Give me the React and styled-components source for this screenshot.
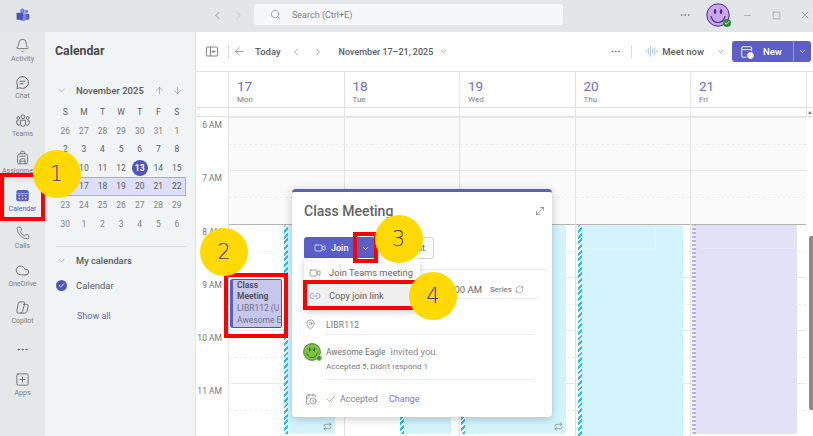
import React from "react";
import styled, { createGlobalStyle } from "styled-components";
import {
  ArrowDown, ArrowLeft, ArrowUp, AudioLines, Backpack, Bell, CalendarClock, Check,
  ChevronDown, ChevronLeft, ChevronRight, Cloud, Ellipsis, Link2, MapPin, Minus,
  MoveDiagonal, Phone, RefreshCw, Repeat, Search, Square, SquarePlus, Video, X,
} from "lucide-react";

const Global = createGlobalStyle`
  html, body { margin: 0; padding: 0; background: #fff; }
  * { box-sizing: border-box; }
  body { font-family: Roboto, "Noto Sans", Arial, sans-serif; color: #555; }
`;

const Page = styled.div`
  position: relative;
  width: 813px;
  height: 436px;
  overflow: hidden;
  display: flex;
  flex-direction: column;
`;

/* ---------- title bar ---------- */
const TitleBar = styled.header`
  height: 32px;
  flex: none;
  background: #e3e6e8;
  display: flex;
  align-items: center;
  color: #707070;
`;
const LogoSlot = styled.div`
  width: 45px;
  display: flex;
  justify-content: center;
  margin-top: -2px;
`;
const BarButton = styled.span`
  width: ${p => p.$w || 21}px;
  margin-left: ${p => p.$ml || 0}px;
  margin-top: -2px;
  flex: none;
  display: flex;
  justify-content: center;
  color: ${p => p.$c || "#707070"};
`;
const SearchBox = styled.div`
  width: 309px;
  height: 21px;
  margin: -3px 0 0 5px;
  background: #f6f7f8;
  border-radius: 3px;
  display: flex;
  align-items: center;
  padding-left: 16px;
  gap: 11px;
  font-size: 9px;
  color: #7d7d7d;
`;
const AvatarSlot = styled.div`
  position: relative;
  width: 24px;
  height: 24px;
  margin: -2px 0 0 11px;
  flex: none;
`;
const StatusDot = styled.span`
  position: absolute;
  right: -1px;
  bottom: 0;
  width: 8px;
  height: 8px;
  border-radius: 50%;
  background: #2e8b3a;
  color: #fff;
  display: flex;
  align-items: center;
  justify-content: center;
`;

/* ---------- layout ---------- */
const Shell = styled.div`
  flex: 1;
  display: flex;
  min-height: 0;
`;
const Rail = styled.nav`
  width: 45px;
  flex: none;
  background: #e4e8e8;
  display: flex;
  flex-direction: column;
`;
const RailItem = styled.div`
  height: ${p => p.$h || 37.5}px;
  flex: none;
  display: flex;
  flex-direction: column;
  align-items: center;
  justify-content: center;
  gap: 1px;
  color: ${p => (p.$active ? "#5b5fc7" : "#616161")};
  background: ${p => (p.$active ? "#edf0f0" : "transparent")};
`;
const RailLabel = styled.span`
  font-size: 7px;
  line-height: 10px;
  white-space: nowrap;
  color: ${p => (p.$active ? "#5b5fc7" : "#7f7f7f")};
`;

/* ---------- sidebar ---------- */
const Sidebar = styled.aside`
  width: 151px;
  flex: none;
  background: #f0f4f5;
  border-right: 1px solid #e2e5e6;
  padding: 11px 9px 0 11px;
  color: #555;
`;
const SideTitle = styled.h2`
  margin: 0 0 0 -1px;
  font-size: 12.3px;
  line-height: 16px;
  font-weight: 700;
  color: #4a4a4a;
`;
const MonthHead = styled.div`
  height: 20px;
  margin: 21px 0 2.7px;
  display: flex;
  align-items: center;
  font-size: 9.5px;
  font-weight: 500;
  color: #5a5a5a;
`;
const ChevronSlot = styled.span`
  width: 20px;
  flex: none;
  display: flex;
  justify-content: flex-start;
  color: #777;
`;
const MonthName = styled.span`
  flex: 1;
`;
const MonthArrows = styled.span`
  display: flex;
  gap: 7px;
  margin-right: 3px;
  color: #777;
`;
const WeekRow = styled.div`
  display: grid;
  grid-template-columns: repeat(7, 18.6px);
  height: 18.6px;
  align-items: center;
  justify-items: center;
  font-size: 8.5px;
  background: ${p => (p.$selected ? "#dcdff7" : "transparent")};
  outline: ${p => (p.$selected ? "1px solid #a9abd0" : "none")};
  outline-offset: -1px;
`;
const Day = styled.span`
  width: 16px;
  height: 16px;
  line-height: 16px;
  border-radius: 50%;
  text-align: center;
  color: ${p => (p.$today ? "#fff" : p.$muted ? "#808080" : "#5c5c5c")};
  background: ${p => (p.$today ? "#5255b8" : "transparent")};
  font-weight: ${p => (p.$today ? 700 : 400)};
`;
const SideDivider = styled.hr`
  margin: 13px 0 3.5px;
  border: 0;
  border-top: 1px solid #d9dcdd;
`;
const SideRow = styled.div`
  height: 20px;
  margin-top: ${p => p.$mt || 0}px;
  display: flex;
  align-items: center;
  font-size: ${p => p.$size || 9.5}px;
  font-weight: ${p => p.$weight || 400};
  color: ${p => p.$c || "#5a5a5a"};
  padding-left: ${p => p.$pl || 0}px;
`;
const CheckDot = styled.span`
  width: 11px;
  height: 11px;
  margin-right: 9px;
  border-radius: 50%;
  background: #5255b8;
  color: #fff;
  display: flex;
  align-items: center;
  justify-content: center;
`;

/* ---------- main ---------- */
const Main = styled.main`
  flex: 1;
  min-width: 0;
  display: flex;
  flex-direction: column;
  background: #fff;
`;
const Toolbar = styled.div`
  height: 40px;
  flex: none;
  display: flex;
  align-items: center;
  border-bottom: 1px solid #e2e2e2;
  color: #666;
`;
const Tool = styled.span`
  width: ${p => p.$w}px;
  margin-left: ${p => p.$ml || 0}px;
  flex: none;
  display: flex;
  justify-content: center;
`;
const VSep = styled.span`
  width: 1px;
  height: 13px;
  margin-left: ${p => p.$ml || 0}px;
  background: #dcdcdc;
  flex: none;
`;
const ToolText = styled.span`
  margin-left: ${p => p.$ml || 0}px;
  font-size: ${p => p.$size || 9.5}px;
  font-weight: ${p => p.$weight || 500};
  color: #5c5c5c;
  white-space: nowrap;
`;
const Spacer = styled.span`
  flex: 1;
`;
const NewButton = styled.div`
  width: 79px;
  height: 21px;
  margin: 0 2px 0 6px;
  flex: none;
  display: flex;
  align-items: center;
  background: #5b5fc7;
  border-radius: 3px;
  color: #fff;
  font-size: 9.5px;
  font-weight: 500;
`;
const NewMain = styled.span`
  width: 62px;
  height: 100%;
  display: flex;
  align-items: center;
  gap: 9px;
  padding-left: 8px;
  border-right: 1px solid #9497dd;
`;
const NewCaret = styled.span`
  flex: 1;
  display: flex;
  justify-content: center;
`;

const WeekHeader = styled.div`
  height: 36px;
  flex: none;
  display: grid;
  grid-template-columns: 32px repeat(5, 115.5px) 1fr;
  border-bottom: 1px solid #e2e2e2;
`;
const DayHead = styled.div`
  border-left: 1px solid #e2e2e2;
  padding: 6px 0 0 8px;
  display: flex;
  flex-direction: column;
`;
const DayNum = styled.span`
  font-size: 13.5px;
  line-height: 17px;
  color: #6a6cd8;
`;
const DayName = styled.span`
  font-size: 8px;
  line-height: 10px;
  color: #7c7c7c;
`;
const HeaderEnd = styled.div`
  border-left: 1px solid #e2e2e2;
`;
const AllDay = styled.div`
  height: 9px;
  flex: none;
  display: grid;
  grid-template-columns: 32px repeat(5, 115.5px) 1fr;
  border-bottom: 1px solid #e2e2e2;
`;
const AllDayCell = styled.div`
  border-left: 1px solid #e2e2e2;
`;
const ScrollUp = styled.div`
  border-left: 1px solid #e2e2e2;
  position: relative;
  &::after {
    content: "";
    position: absolute;
    right: 1px;
    top: 3px;
    border-left: 2px solid transparent;
    border-right: 2px solid transparent;
    border-bottom: 3px solid #777;
  }
`;
const Grid = styled.div`
  flex: 1;
  min-height: 0;
  overflow: hidden;
  display: grid;
  grid-template-columns: 32px repeat(5, 115.5px) 1fr;
`;
const Gutter = styled.div`
  display: flex;
  flex-direction: column;
`;
const GutterLabel = styled.div`
  height: 53.3px;
  flex: none;
  text-align: right;
  padding: 3px 6px 0 0;
  font-size: 8.5px;
  line-height: 11px;
  color: #767676;
`;
const DayColumn = styled.div`
  position: relative;
  border-left: 1px solid #e2e2e2;
`;
const Hour = styled.div`
  position: relative;
  height: 53.3px;
  background: ${p => (p.$off ? "#fafafa" : "#fff")};
  border-top: 1px solid ${p => (p.$strong ? "#b4b4b4" : "#e8e8e8")};
  &::after {
    content: "";
    position: absolute;
    left: 0;
    right: 0;
    top: 26px;
    border-top: 1px dashed #eeeeee;
  }
`;
const Event = styled.div`
  position: absolute;
  z-index: 1;
  left: ${p => p.$left}px;
  width: ${p => p.$width}px;
  top: 108px;
  height: ${p => p.$h || 209}px;
  background: ${p => (p.$lav ? "#e2e2f6" : "#d3f4fd")};
  border-radius: 2px;
  overflow: hidden;
  &::before {
    content: "";
    position: absolute;
    left: 0;
    top: 0;
    bottom: 0;
    width: 4px;
    background: ${p =>
      p.$lav
        ? "repeating-linear-gradient(0deg, #b4b0ea 0 2px, #efeefc 2px 4px)"
        : "repeating-linear-gradient(135deg, #29bdee 0 2px, #e6fbff 2px 4px)"};
  }
`;
const EventGhost = styled.span`
  position: absolute;
  left: 6px;
  top: 5px;
  width: ${p => p.$w}px;
  height: 19px;
  border-right: 1px solid ${p => p.$c};
  border-bottom: 1px solid ${p => p.$c};
`;
const EventSync = styled.span`
  position: absolute;
  right: ${p => p.$right || 3}px;
  bottom: 3px;
  color: #555;
  display: flex;
`;
const Scroller = styled.div`
  padding: 119px 0 0 3.5px;
`;
const ScrollThumb = styled.div`
  width: 4px;
  height: 174px;
  border-radius: 2px 0 0 2px;
  background: #8a8a8a;
`;
const ClassEvent = styled.div`
  position: absolute;
  z-index: 2;
  left: 1px;
  top: 162px;
  width: 52px;
  height: 49px;
  background: #c6c7ed;
  border: 1px solid #555a66;
  border-left: 3px solid #5b5fc7;
  border-radius: 2px;
  padding: 0 0 0 4px;
  overflow: hidden;
  font-size: 8.5px;
  white-space: nowrap;
  color: #5c5c70;
`;
const EventLine = styled.div`
  height: ${p => p.$h || 11}px;
  line-height: ${p => p.$h || 11}px;
  font-weight: ${p => (p.$bold ? 700 : 400)};
  color: ${p => (p.$bold ? "#55555e" : "#72728a")};
`;

/* ---------- popup ---------- */
const Popup = styled.section`
  position: absolute;
  z-index: 5;
  left: 292px;
  top: 189px;
  width: 260px;
  height: 228px;
  background: #fff;
  border-top: 3px solid #5b5fc7;
  border-radius: 4px;
  box-shadow: 0 2px 10px rgba(0, 0, 0, 0.22);
  padding: 0 0 0 12px;
`;
const PopupHead = styled.div`
  height: 20px;
  margin-top: 9px;
  display: flex;
  align-items: center;
  justify-content: space-between;
  padding-right: 6px;
  color: #666;
`;
const PopupTitle = styled.h3`
  margin: 0;
  font-size: 14px;
  font-weight: 500;
  color: #636363;
  white-space: nowrap;
`;
const ActionRow = styled.div`
  height: 22px;
  margin: 16px 0 10px;
  display: flex;
  gap: 3px;
`;
const JoinButton = styled.div`
  width: 71px;
  height: 22px;
  background: #5b5fc7;
  border-radius: 3px;
  color: #fff;
  display: flex;
  align-items: center;
  font-size: 9px;
  font-weight: 500;
  padding-left: 10px;
  gap: 5px;
  position: relative;
`;
const JoinCaret = styled.span`
  position: absolute;
  right: 0;
  top: 0;
  bottom: 0;
  width: 19px;
  display: flex;
  align-items: center;
  justify-content: center;
`;
const ChatButton = styled.div`
  width: 56px;
  height: 22px;
  border: 1px solid #cfcfcf;
  border-radius: 3px;
  display: flex;
  align-items: center;
  justify-content: flex-end;
  padding-right: 8px;
  font-size: 9px;
  font-weight: 500;
  color: #777;
`;
const PopDivider = styled.div`
  height: 1px;
  margin: 0 ${p => p.$right}px 0 ${p => p.$left}px;
  background: #eeeeee;
`;
const TimeRow = styled.div`
  height: 28px;
  padding: 11px 28px 0 0;
  display: flex;
  justify-content: flex-end;
  align-items: center;
  gap: 8px;
  font-size: 9.5px;
  line-height: 14px;
  color: #666;
  white-space: nowrap;
`;
const SeriesTag = styled.span`
  display: flex;
  align-items: center;
  gap: 3px;
  font-size: 8px;
  color: #6c6c6c;
`;
const LocationRow = styled.div`
  height: 35px;
  padding-top: 16px;
  display: flex;
  align-items: center;
  font-size: 8.5px;
  color: #777;
  letter-spacing: 0.2px;
`;
const RowIcon = styled.span`
  width: 22px;
  flex: none;
  padding-left: 1px;
  display: flex;
  color: #6a6a6a;
`;
const OrganizerRow = styled.div`
  height: 44px;
  display: flex;
  padding-top: 8px;
`;
const AvatarWrap = styled.span`
  position: relative;
  width: 18px;
  height: 18px;
  margin: 0 5px 0 -1px;
  flex: none;
`;
const MiniBadge = styled.span`
  position: absolute;
  right: -1px;
  bottom: 0;
  width: 6px;
  height: 6px;
  border-radius: 50%;
  background: #3c8f3c;
  border: 1px solid #8fd06a;
`;
const OrganizerText = styled.div`
  display: flex;
  flex-direction: column;
`;
const OrganizerLine = styled.div`
  font-size: 8.4px;
  line-height: 14px;
  margin-top: 2px;
  color: #6f6f6f;
  white-space: nowrap;
`;
const InviteText = styled.span`
  margin-left: 3px;
  color: #858585;
  font-size: 9.4px;
`;
const AttendLine = styled.div`
  font-size: 8.1px;
  line-height: 12px;
  margin-top: 1px;
  color: #7a7a7a;
  white-space: nowrap;
`;
const ResponseRow = styled.div`
  height: 36px;
  display: flex;
  align-items: center;
  padding-top: 2px;
  font-size: 9px;
  color: #858585;
`;
const CheckMark = styled.span`
  display: flex;
  margin: 0 3px 0 -1px;
  color: #6f9e4f;
`;
const ChangeLink = styled.span`
  margin-left: 11px;
  color: #7376cf;
`;
const Menu = styled.div`
  position: absolute;
  left: 12px;
  top: 66px;
  width: 116px;
  height: 52px;
  padding-top: 3px;
  background: #fff;
  border-radius: 3px;
  box-shadow: 0 2px 7px rgba(0, 0, 0, 0.2);
`;
const MenuItem = styled.div`
  height: 23px;
  display: flex;
  align-items: center;
  padding-left: 3px;
  font-size: 9.3px;
  color: #5f5f5f;
  white-space: nowrap;
  background: ${p => (p.$hover ? "#f0f0f0" : "transparent")};
`;
const MenuIcon = styled.span`
  width: 22px;
  flex: none;
  padding-left: 2px;
  display: flex;
  color: ${p => p.$c || "#666"};
`;

/* ---------- annotations ---------- */
const RedBox = styled.div`
  position: absolute;
  z-index: 8;
  left: ${p => p.$x}px;
  top: ${p => p.$y}px;
  width: ${p => p.$w}px;
  height: ${p => p.$h}px;
  border: 4.5px solid #ff0000;
`;
const Marker = styled.div`
  position: absolute;
  z-index: 9;
  left: ${p => p.$x - 24}px;
  top: ${p => p.$y - 24}px;
  width: 48px;
  height: 48px;
  border-radius: 50%;
  background: #ffd900;
  color: #4b3596;
  font-family: "DejaVu Sans", sans-serif;
  font-size: 21px;
  font-weight: 300;
  display: flex;
  align-items: center;
  justify-content: center;
`;

/* ---------- drawings ---------- */
const TeamsLogo = () => (
  <svg width="14" height="14" viewBox="0 0 24 24">
    <circle cx="18" cy="6" r="3" fill="#7b83eb" />
    <rect x="15" y="10" width="8" height="10" rx="3" fill="#5059c9" />
    <circle cx="11" cy="5" r="4" fill="#7b83eb" />
    <rect x="6" y="9" width="12" height="13" rx="3" fill="#7b83eb" />
    <rect x="1" y="8" width="11" height="12" rx="1" fill="#4b53bc" />
  </svg>
);
const ChatIcon = () => (
  <svg width="15" height="15" viewBox="0 0 24 24" fill="none" stroke="currentColor" strokeWidth="1.5" strokeLinecap="round">
    <path d="M12 2.5a9.5 9.5 0 1 1-4.4 17.9L2.8 21.6l1.3-4.6A9.5 9.5 0 0 1 12 2.5Z" />
    <path d="M8 10h8M8 14h5" />
  </svg>
);
const TeamsIcon = () => (
  <svg width="16" height="15" viewBox="0 0 24 24" fill="none" stroke="currentColor" strokeWidth="1.4">
    <circle cx="12" cy="6" r="3" />
    <circle cx="4.5" cy="8" r="2.2" />
    <circle cx="19.5" cy="8" r="2.2" />
    <path d="M8 11.5h8v6a4 4 0 0 1-8 0z" />
    <path d="M5 12.5H2v3.5a3.5 3.5 0 0 0 5.5 2.8M19 12.5h3v3.5a3.5 3.5 0 0 1-5.5 2.8" />
  </svg>
);
const CalendarIcon = () => (
  <svg width="15" height="15" viewBox="0 0 24 24">
    <rect x="2" y="3" width="20" height="18" rx="3" fill="#5b5fc7" />
    <rect x="2" y="8" width="20" height="1" fill="#cfd1f3" />
    {[7, 12, 17].map(x => [12, 17].map(y => (
      <circle key={`${x}-${y}`} cx={x} cy={y} r="1.3" fill="#e8e9fb" />
    )))}
  </svg>
);
const CopilotIcon = () => (
  <svg width="15" height="15" viewBox="0 0 24 24" fill="none" stroke="currentColor" strokeWidth="1.4">
    <path d="M8 3h5a2.5 2.5 0 0 1 2.4 3.2L12 18a4 4 0 0 1-3.8 3H6a3 3 0 0 1-3-3.6l2-11.5A3.5 3.5 0 0 1 8 3Z" />
    <path d="M13 7h5a3 3 0 0 1 3 3.6l-1.6 7A4.5 4.5 0 0 1 15 21H9" />
  </svg>
);
const PanelIcon = () => (
  <svg width="12" height="11" viewBox="0 0 24 22" fill="none" stroke="currentColor" strokeWidth="1.6">
    <rect x="1" y="2" width="22" height="18" rx="1.5" />
    <path d="M9 2v18M13 11h6M15 8l-3 3 3 3" />
  </svg>
);
const NewCalIcon = () => (
  <svg width="14" height="14" viewBox="0 0 24 24" fill="none" stroke="#fff" strokeWidth="1.6">
    <path d="M11 21H5a2 2 0 0 1-2-2V5a2 2 0 0 1 2-2h13a2 2 0 0 1 2 2v6M3 8h17" />
    <circle cx="18" cy="18" r="5" fill="#fff" />
  </svg>
);
const Smiley = ({ size, bg, ink }) => (
  <svg width={size} height={size} viewBox="0 0 24 24">
    <circle cx="12" cy="12" r="11.2" fill={bg} stroke={ink} strokeWidth="1" />
    <ellipse cx="9" cy="8.5" rx="1.3" ry="2.6" fill={ink} />
    <ellipse cx="15" cy="8.5" rx="1.3" ry="2.6" fill={ink} />
    <path d="M5 13.5c1.5 4.5 4 6 7 6s5.5-1.5 7-6" fill="none" stroke={ink} strokeWidth="1.2" strokeLinecap="round" />
  </svg>
);

/* ---------- data ---------- */
const railItems = [
  ["Activity", <Bell size={15} strokeWidth={1.3} />],
  ["Chat", <ChatIcon />],
  ["Teams", <TeamsIcon />],
  ["Assignments", <Backpack size={15} strokeWidth={1.3} />],
  ["Calendar", <CalendarIcon />, true],
  ["Calls", <Phone size={14} strokeWidth={1.3} />],
  ["OneDrive", <Cloud size={15} strokeWidth={1.3} />],
  ["Copilot", <CopilotIcon />],
];
const weeks = [
  [["S", 0], ["M", 0], ["T", 0], ["W", 0], ["T", 0], ["F", 0], ["S", 0]],
  [[26, 1], [27, 1], [28, 1], [29, 1], [30, 1], [31, 1], [1, 1]],
  [[2, 0], [3, 0], [4, 0], [5, 0], [6, 0], [7, 0], [8, 0]],
  [[9, 0], [10, 0], [11, 0], [12, 0], [13, 0], [14, 0], [15, 0]],
  [[16, 0], [17, 0], [18, 0], [19, 0], [20, 0], [21, 0], [22, 0]],
  [[23, 1], [24, 1], [25, 1], [26, 1], [27, 1], [28, 1], [29, 1]],
  [[30, 1], [1, 1], [2, 1], [3, 1], [4, 1], [5, 1], [6, 1]],
];
const days = [[17, "Mon"], [18, "Tue"], [19, "Wed"], [20, "Thu"], [21, "Fri"]];
const hours = ["6 AM", "7 AM", "8 AM", "9 AM", "10 AM", "11 AM"];

const HourCells = () =>
  hours.map((h, i) => <Hour key={h} $off={i < 2} $strong={i === 2} />);

export default function App() {
  return (
    <Page>
      <Global />
      <TitleBar>
        <LogoSlot><TeamsLogo /></LogoSlot>
        <BarButton $ml={162}><ChevronLeft size={13} strokeWidth={1.3} /></BarButton>
        <BarButton $c="#b5b8ba"><ChevronRight size={13} strokeWidth={1.3} /></BarButton>
        <SearchBox><Search size={11} strokeWidth={1.4} />Search (Ctrl+E)</SearchBox>
        <BarButton $ml={111} $w={21}><Ellipsis size={12} strokeWidth={1.4} /></BarButton>
        <AvatarSlot>
          <Smiley size={24} bg="#c9a6ea" ink="#4f2a8f" />
          <StatusDot><Check size={6} strokeWidth={3} /></StatusDot>
        </AvatarSlot>
        <BarButton $ml={9} $w={16} $c="#8c8c8c"><Minus size={11} strokeWidth={1.2} /></BarButton>
        <BarButton $ml={13} $w={16} $c="#707070"><Square size={9} strokeWidth={1.2} /></BarButton>
        <BarButton $ml={13} $w={16} $c="#707070"><X size={12} strokeWidth={1.1} /></BarButton>
      </TitleBar>

      <Shell>
        <Rail>
          {railItems.map(([label, icon, active]) => (
            <RailItem key={label} $active={active}>
              {icon}
              <RailLabel $active={active}>{label}</RailLabel>
            </RailItem>
          ))}
          <RailItem $h={34.5}><Ellipsis size={13} strokeWidth={1.8} /></RailItem>
          <RailItem>
            <SquarePlus size={15} strokeWidth={1.3} />
            <RailLabel>Apps</RailLabel>
          </RailItem>
        </Rail>

        <Sidebar>
          <SideTitle>Calendar</SideTitle>
          <MonthHead>
            <ChevronSlot><ChevronDown size={11} strokeWidth={1.2} /></ChevronSlot>
            <MonthName>November 2025</MonthName>
            <MonthArrows>
              <ArrowUp size={11} strokeWidth={1.2} />
              <ArrowDown size={11} strokeWidth={1.2} />
            </MonthArrows>
          </MonthHead>
          {weeks.map((w, i) => (
            <WeekRow key={i} $selected={i === 4}>
              {w.map(([d, muted], j) => (
                <Day key={j} $muted={muted} $today={d === 13}>{d}</Day>
              ))}
            </WeekRow>
          ))}
          <SideDivider />
          <SideRow $weight={500} $size={9.3}>
            <ChevronSlot><ChevronDown size={11} strokeWidth={1.2} /></ChevronSlot>
            My calendars
          </SideRow>
          <SideRow $mt={5}>
            <CheckDot><Check size={7} strokeWidth={3} /></CheckDot>
            Calendar
          </SideRow>
          <SideRow $mt={11} $pl={21} $c="#6264a7" $size={9}>Show all</SideRow>
        </Sidebar>

        <Main>
          <Toolbar>
            <Tool $w={32}><PanelIcon /></Tool>
            <VSep />
            <Tool $w={21}><ArrowLeft size={13} strokeWidth={1.1} /></Tool>
            <ToolText $ml={5}>Today</ToolText>
            <Tool $w={12} $ml={9}><ChevronLeft size={12} strokeWidth={1.2} /></Tool>
            <Tool $w={12} $ml={10}><ChevronRight size={12} strokeWidth={1.2} /></Tool>
            <ToolText $ml={15} $size={9}>November 17–21, 2025</ToolText>
            <Tool $w={10} $ml={5}><ChevronDown size={9} strokeWidth={1.4} /></Tool>
            <Spacer />
            <Tool $w={14}><Ellipsis size={11} strokeWidth={1.6} /></Tool>
            <VSep $ml={9} />
            <Tool $w={14} $ml={12}><AudioLines size={13} strokeWidth={1.2} color="#7aa7c7" /></Tool>
            <ToolText $ml={4}>Meet now</ToolText>
            <Tool $w={12} $ml={10}><ChevronDown size={9} strokeWidth={1.4} /></Tool>
            <NewButton>
              <NewMain><NewCalIcon />New</NewMain>
              <NewCaret><ChevronDown size={9} strokeWidth={1.8} /></NewCaret>
            </NewButton>
          </Toolbar>

          <WeekHeader>
            <span />
            {days.map(([n, d]) => (
              <DayHead key={n}>
                <DayNum>{n}</DayNum>
                <DayName>{d}</DayName>
              </DayHead>
            ))}
            <HeaderEnd />
          </WeekHeader>
          <AllDay>
            <span />
            {days.map(([n]) => <AllDayCell key={n} />)}
            <ScrollUp />
          </AllDay>

          <Grid>
            <Gutter>
              {hours.map(h => <GutterLabel key={h}>{h}</GutterLabel>)}
            </Gutter>
            <DayColumn>
              <HourCells />
              <ClassEvent>
                <EventLine $bold>Class</EventLine>
                <EventLine $bold>Meeting</EventLine>
                <EventLine $h={12}>LIBR112 (U</EventLine>
                <EventLine $h={13}>Awesome E</EventLine>
              </ClassEvent>
              <Event $left={55} $width={51}>
                <EventSync><Repeat size={9} strokeWidth={1.3} /></EventSync>
              </Event>
            </DayColumn>
            <DayColumn>
              <HourCells />
              <Event $left={55} $width={51} />
            </DayColumn>
            <DayColumn>
              <HourCells />
              <Event $left={1} $width={105}>
                <EventSync><Repeat size={9} strokeWidth={1.3} /></EventSync>
              </Event>
            </DayColumn>
            <DayColumn>
              <HourCells />
              <Event $left={2} $width={105} $h={220}>
                <EventGhost $w={72} $c="#e0f8ff" />
              </Event>
            </DayColumn>
            <DayColumn>
              <HourCells />
              <Event $left={1} $width={105} $lav>
                <EventGhost $w={97} $c="#e9e9fa" />
              </Event>
            </DayColumn>
            <Scroller><ScrollThumb /></Scroller>
          </Grid>
        </Main>
      </Shell>

      <Popup>
        <PopupHead>
          <PopupTitle>Class Meeting</PopupTitle>
          <MoveDiagonal size={12} strokeWidth={1.2} />
        </PopupHead>
        <ActionRow>
          <JoinButton>
            <Video size={12} strokeWidth={1.3} />
            Join
            <JoinCaret><ChevronDown size={9} strokeWidth={1.8} /></JoinCaret>
          </JoinButton>
          <ChatButton>Chat</ChatButton>
        </ActionRow>
        <PopDivider $left={0} $right={6} />
        <TimeRow>
          9:00 AM - 10:00 AM
          <SeriesTag>Series <RefreshCw size={9} strokeWidth={1.2} /></SeriesTag>
        </TimeRow>
        <PopDivider $left={21} $right={14} />
        <LocationRow>
          <RowIcon><MapPin size={11} strokeWidth={1.3} /></RowIcon>
          LIBR112
        </LocationRow>
        <PopDivider $left={21} $right={19} />
        <OrganizerRow>
          <AvatarWrap>
            <Smiley size={18} bg="#7cc243" ink="#2c6a1f" />
            <MiniBadge />
          </AvatarWrap>
          <OrganizerText>
            <OrganizerLine>Awesome Eagle <InviteText>invited you.</InviteText></OrganizerLine>
            <AttendLine>Accepted 5, Didn't respond 1</AttendLine>
          </OrganizerText>
        </OrganizerRow>
        <PopDivider $left={21} $right={19} />
        <ResponseRow>
          <RowIcon><CalendarClock size={12} strokeWidth={1.3} /></RowIcon>
          <CheckMark><Check size={12} strokeWidth={1.2} /></CheckMark>
          Accepted
          <ChangeLink>Change</ChangeLink>
        </ResponseRow>
        <Menu>
          <MenuItem>
            <MenuIcon><Video size={12} strokeWidth={1.2} /></MenuIcon>
            Join Teams meeting
          </MenuItem>
          <MenuItem $hover>
            <MenuIcon $c="#7a7dd6"><Link2 size={12} strokeWidth={1.4} /></MenuIcon>
            Copy join link
          </MenuItem>
        </Menu>
      </Popup>

      <RedBox $x={0} $y={173} $w={45} $h={48} />
      <RedBox $x={224} $y={273} $w={64} $h={65} />
      <RedBox $x={353} $y={232} $w={25} $h={31} />
      <RedBox $x={303} $y={280} $w={115} $h={30} />
      <Marker $x={56.5} $y={173.5}>1</Marker>
      <Marker $x={224} $y={251.5}>2</Marker>
      <Marker $x={398.5} $y={238.5}>3</Marker>
      <Marker $x={433} $y={295.5}>4</Marker>
    </Page>
  );
}
